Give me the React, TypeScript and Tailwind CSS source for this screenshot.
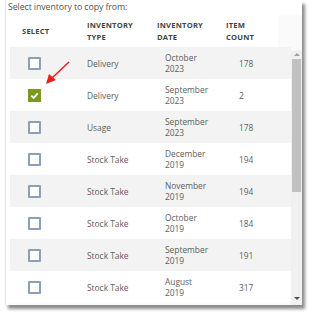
import React from "react";

type Row = { type: string; month: string; year: string; count: string; checked?: boolean };

const rows: Row[] = [
  { type: "Delivery", month: "October", year: "2023", count: "178" },
  { type: "Delivery", month: "September", year: "2023", count: "2", checked: true },
  { type: "Usage", month: "September", year: "2023", count: "178" },
  { type: "Stock Take", month: "December", year: "2019", count: "194" },
  { type: "Stock Take", month: "November", year: "2019", count: "194" },
  { type: "Stock Take", month: "October", year: "2019", count: "184" },
  { type: "Stock Take", month: "September", year: "2019", count: "191" },
  { type: "Stock Take", month: "August", year: "2019", count: "317" },
];

function Checkbox({ checked }: { checked?: boolean }) {
  if (checked) {
    return (
      <div className="w-[13px] h-[13px] bg-[#7a9a1e] flex items-center justify-center">
        <svg width="9" height="9" viewBox="0 0 10 10">
          <path d="M1.5 5.2 L4 7.6 L8.6 2.6" fill="none" stroke="#fff" strokeWidth="2" />
        </svg>
      </div>
    );
  }
  return <div className="w-[13px] h-[13px] border-2 border-[#8aa0b6] bg-white rounded-[1px]" />;
}

export default function App() {
  return (
    <div className="w-[314px] h-[322px] bg-white pl-[5px] font-['Open_Sans','Liberation_Sans',sans-serif] text-[#5e5e5e] relative">
      <div className="w-[297px] h-[305px] bg-white border-l border-[#e6e6e6] flex flex-col shadow-[3px_4px_3px_rgba(0,0,0,0.45)]">
        <div className="h-[15px] pl-[2px] pt-[1px] text-[8.8px] leading-[12px] text-[#555] tracking-[-0.1px]">
          Select inventory to copy from:
        </div>
        <div className="ml-[4px] flex-1 bg-[#fafafa] flex flex-col">
          <div className="h-[32px] w-[268px] bg-white grid grid-cols-[77px_70px_68px_1fr] items-center text-[7.6px] leading-[12px] font-bold text-[#444] tracking-[0.2px]">
            <div className="pl-[12px]">SELECT</div>
            <div>INVENTORY<br />TYPE</div>
            <div>INVENTORY<br />DATE</div>
            <div className="pl-[1px]">ITEM<br />COUNT</div>
          </div>
          <div className="flex flex-1">
            <div className="w-[281px] flex flex-col">
              {rows.map((r, i) => (
                <div
                  key={i}
                  className={`h-[32px] grid grid-cols-[77px_70px_68px_1fr] items-center text-[8.4px] leading-[11px] ${
                    i % 2 === 0 ? "bg-[#f3f3f3]" : "bg-white"
                  }`}
                >
                  <div className="pl-[18px]">
                    <Checkbox checked={r.checked} />
                  </div>
                  <div>{r.type}</div>
                  <div className="pl-[8px]">
                    {r.month}
                    <br />
                    {r.year}
                  </div>
                  <div className="pl-[14px]">{r.count}</div>
                </div>
              ))}
            </div>
            <div className="w-[11px] mt-[3px] bg-[#f0f0f0] flex flex-col items-center">
              <svg width="6" height="5" viewBox="0 0 6 5" className="mt-[2px]">
                <path d="M0 4 L3 1 L6 4 Z" fill="#a0a0a0" />
              </svg>
              <div className="w-[9px] h-[133px] bg-[#c1c1c1] mt-[2px]" />
              <div className="flex-1" />
              <svg width="6" height="5" viewBox="0 0 6 5" className="mb-[4px]">
                <path d="M0 1 L3 4 L6 1 Z" fill="#505050" />
              </svg>
            </div>
          </div>
        </div>
      </div>
      <svg className="absolute left-0 top-0" width="314" height="322" viewBox="0 0 314 322">
        <line x1="69" y1="62" x2="52" y2="78" stroke="#e8201c" strokeWidth="1.6" />
        <path d="M46 84 L49 74 L56 80 Z" fill="#e8201c" />
      </svg>
    </div>
  );
}
